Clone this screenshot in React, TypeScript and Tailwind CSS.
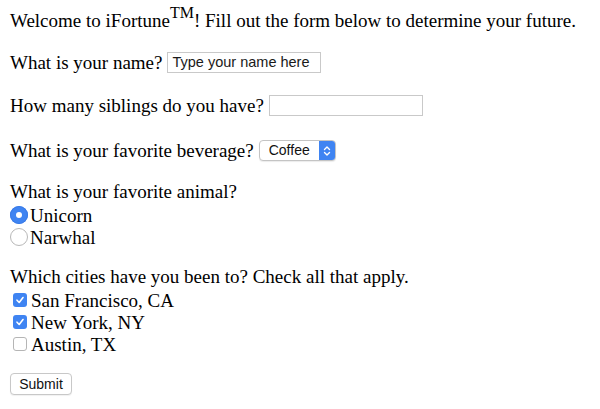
import React from "react";

const serif = { fontFamily: '"Liberation Serif", "Times New Roman", serif' };
const sans = { fontFamily: '"Liberation Sans", Arial, sans-serif' };

function Radio({ checked }: { checked?: boolean }) {
  return checked ? (
    <span className="flex h-[18px] w-[18px] shrink-0 items-center justify-center rounded-full bg-[#3f84f2] shadow-[0_0_0_1px_#3a7be6_inset]">
      <span className="h-[6px] w-[6px] rounded-full bg-white" />
    </span>
  ) : (
    <span className="h-[18px] w-[18px] shrink-0 rounded-full border border-[#b8b8b8] bg-white" />
  );
}

function Check({ checked }: { checked?: boolean }) {
  return checked ? (
    <span className="flex h-[14px] w-[14px] shrink-0 items-center justify-center rounded-[3px] bg-[#3f84f2]">
      <svg width="10" height="10" viewBox="0 0 10 10">
        <path d="M2 5.2 L4.2 7.5 L8 2.5" fill="none" stroke="white" strokeWidth="1.6" strokeLinecap="round" strokeLinejoin="round" />
      </svg>
    </span>
  ) : (
    <span className="h-[14px] w-[14px] shrink-0 rounded-[3px] border border-[#b5b5b5] bg-white" />
  );
}

export default function App() {
  return (
    <div className="flex flex-col pl-[10px] text-[19px] text-black bg-white min-h-[409px]" style={serif}>
      <div className="mt-[10px] flex h-[21px] items-end leading-[21px]">
        <span>
          Welcome to iFortune<sup className="relative top-[-2px] text-[16px] align-super leading-none">TM</sup>! Fill out the form below to determine your future.
        </span>
      </div>

      <div className="mt-[21px] flex h-[21px] items-center gap-[5px]">
        <span className="leading-[21px]">What is your name?</span>
        <input
          readOnly
          defaultValue="Type your name here"
          className="h-[21px] w-[154px] border border-[#c9c9c9] bg-white px-[4px] text-[14.5px] text-[#1a1a1a] outline-none"
          style={sans}
        />
      </div>

      <div className="mt-[22px] flex h-[21px] items-center gap-[5px]">
        <span className="leading-[21px]">How many siblings do you have?</span>
        <input
          readOnly
          className="h-[21px] w-[154px] border border-[#c9c9c9] bg-white px-[4px] text-[14.5px] outline-none"
        />
      </div>

      <div className="mt-[24px] flex h-[21px] items-center gap-[5px]">
        <span className="leading-[21px]">What is your favorite beverage?</span>
        <div
          className="flex h-[21px] w-[77px] overflow-hidden rounded-[4px] border border-[#c4c4c4] bg-white shadow-[0_1px_1px_rgba(0,0,0,0.08)]"
          style={sans}
        >
          <span className="flex flex-1 items-center pl-[9px] text-[14px] text-[#111]">Coffee</span>
          <span className="flex w-[16px] items-center justify-center bg-[#3f84f2]">
            <svg width="8" height="12" viewBox="0 0 8 12">
              <path d="M1.5 4.5 L4 2 L6.5 4.5 M1.5 7.5 L4 10 L6.5 7.5" fill="none" stroke="white" strokeWidth="1.4" strokeLinecap="round" strokeLinejoin="round" />
            </svg>
          </span>
        </div>
      </div>

      <div className="mt-[20px] flex h-[21px] items-center">
        <span className="leading-[21px]">What is your favorite animal?</span>
      </div>
      <div className="mt-[2px] flex h-[22px] items-center gap-[2px]">
        <Radio checked />
        <span className="leading-[21px]">Unicorn</span>
      </div>
      <div className="flex h-[22px] items-center gap-[2px]">
        <Radio />
        <span className="leading-[21px]">Narwhal</span>
      </div>

      <div className="mt-[18px] flex h-[21px] items-center">
        <span className="leading-[21px]">Which cities have you been to? Check all that apply.</span>
      </div>
      <div className="mt-[2px] flex h-[22px] items-center gap-[4px] pl-[3px]">
        <Check checked />
        <span className="leading-[21px]">San Francisco, CA</span>
      </div>
      <div className="flex h-[22px] items-center gap-[4px] pl-[3px]">
        <Check checked />
        <span className="leading-[21px]">New York, NY</span>
      </div>
      <div className="flex h-[22px] items-center gap-[4px] pl-[3px]">
        <Check />
        <span className="leading-[21px]">Austin, TX</span>
      </div>

      <div className="mt-[18px] flex">
        <button
          className="flex h-[22px] w-[62px] items-center justify-center rounded-[4px] border border-[#c8c8c8] bg-white text-[14px] text-[#111] shadow-[0_1px_1px_rgba(0,0,0,0.06)]"
          style={sans}
        >
          Submit
        </button>
      </div>
    </div>
  );
}
